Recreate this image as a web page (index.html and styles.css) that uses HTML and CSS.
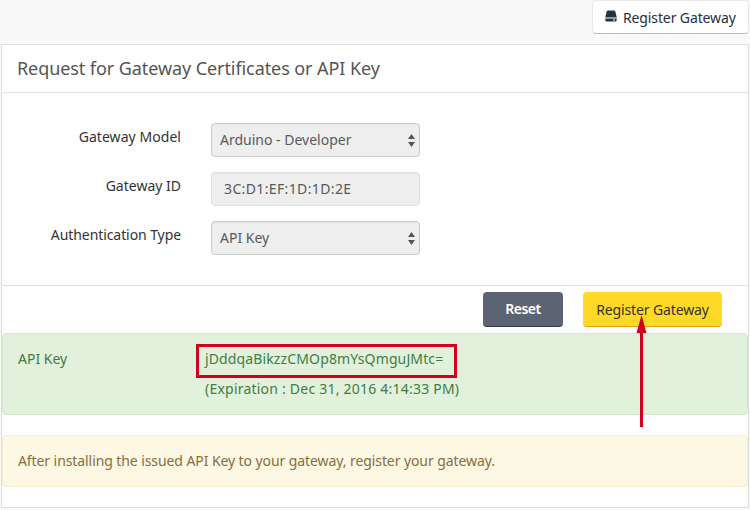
FILE: index.html
```html
<!DOCTYPE html>
<html lang="en">
<head>
<meta charset="utf-8">
<title>Register Gateway</title>
<link rel="stylesheet" href="styles.css">
</head>
<body>
<div class="toolbar">
  <button class="btn btn-default"><svg class="drive" viewBox="0 0 12 12"><path d="M3 .5h6q1 0 1.300 1L11.800 7.500H.2L1.700 1.500Q2 .5 3 .5z"/><path d="M.3 8.500h11.400v1.500q0 1.500-1.500 1.500H1.800Q.3 11.500.3 10z"/><path class="slot" d="M8 10h2"/></svg><span class="t-reg">Register Gateway</span></button>
</div>
<main class="panel">
  <header class="panel-head"><h1><span class="t-title">Request for Gateway Certificates or API Key</span></h1></header>
  <form class="fields">
    <div class="row"><label><span class="t-model">Gateway Model</span></label><div class="control select"><span>Arduino - Developer</span><svg class="sort" viewBox="0 0 7 13"><path d="M3.500 0L7 5H0zM0 8h7l-3.500 5z"/></svg></div></div>
    <div class="row"><label><span>Gateway ID</span></label><div class="control input"><span class="t-mac">3C:D1:EF:1D:1D:2E</span></div></div>
    <div class="row"><label><span class="t-auth">Authentication Type</span></label><div class="control select"><span>API Key</span><svg class="sort" viewBox="0 0 7 13"><path d="M3.500 0L7 5H0zM0 8h7l-3.500 5z"/></svg></div></div>
  </form>
  <div class="actions">
    <button class="btn btn-reset"><span class="t-reset">Reset</span></button>
    <button class="btn btn-primary"><span class="t-reg">Register Gateway</span></button>
  </div>
  <section class="alert success">
    <div class="key-label"><span>API Key</span></div>
    <div class="key-info"><div><span class="t-key">jDddqaBikzzCMOp8mYsQmguJMtc=</span></div><div><span class="t-exp">(Expiration : Dec 31, 2016 4:14:33 PM)</span></div></div>
  </section>
  <section class="alert warning"><span class="t-warn">After installing the issued API Key to your gateway, register your gateway.</span></section>
</main>
<div class="highlight"></div>
<svg class="arrow" viewBox="0 0 12 112"><path d="M6.500 0l5 18H8v94H5V18H1.500z"/></svg>
</body>
</html>
```
FILE: styles.css
```css
* { box-sizing: border-box; }
body { margin: 0; width: 750px; height: 510px; overflow: hidden; background: #f9f9f9; font: 400 14px/20px "Noto Sans", sans-serif; color: #333; }
span { white-space: nowrap; }
.toolbar { height: 44px; padding-right: 1px; display: flex; justify-content: flex-end; }
.btn { font: inherit; border: 0; border-radius: 4px; padding: 0; height: 35px; display: flex; align-items: center; justify-content: center; }
.btn-default { width: 157px; height: 34px; border: 1px solid #e9e9e9; border-bottom-color: #bbb; background: #fff; color: #253044; justify-content: flex-start; padding: 1px 0 0 12px; gap: 6px; }
.drive { width: 12px; height: 12px; fill: #253044; margin-top: -4px; }
.slot { stroke: #fff; stroke-width: 1; }
.panel { width: 748px; height: 464px; margin-left: 1px; background: #fff; border: 1px solid #ddd; }
.panel-head { height: 48px; border-bottom: 1px solid #e3e3e3; padding: 12px 15px; }
h1 { margin: 0; font-size: 18px; font-weight: inherit; line-height: 23px; color: #555; }
.fields { height: 193px; padding-top: 30px; border-bottom: 1px solid #e3e3e3; display: flex; flex-direction: column; gap: 15px; }
.row { display: flex; height: 34px; }
label { width: 179px; padding-top: 4px; margin-right: 30px; text-align: right; }
.control { width: 209px; height: 34px; background: #eee; border: 1px solid #ccc; border-radius: 4px; color: #5a5a5a; display: flex; align-items: center; padding: 0 4px 0 8px; justify-content: space-between; box-shadow: inset 0 1px 1px #0000000d; }
.input { border-color: #e2e2e2; padding-left: 12px; }
.sort { width: 7px; height: 13px; fill: #555; }
.actions { height: 47px; display: flex; justify-content: flex-end; gap: 20px; padding: 6px 26px 0 0; }
.btn-reset { width: 80px; background: #5c6473; color: #fff; border-bottom: 1px solid #303846; font-weight: 600; }
.btn-primary { width: 139px; background: #ffd926; color: #333; border-bottom: 1px solid #e5a500; padding-top: 1px; }
.alert { border: 1px solid; border-radius: 4px; width: 746px; padding: 15px; }
.success { height: 82px; background: #e1f1dc; border-color: #d3e8c6; color: #437c44; display: flex; }
.key-label { width: 187px; }
.key-info { display: grid; gap: 10px; align-content: start; }
.warning { height: 52px; margin-top: 20px; background: #fcf8e4; border-color: #faebcc; color: #8a6d3b; }
.highlight { position: absolute; left: 196px; top: 344px; width: 261px; height: 34px; border: 3px solid #d0021b; }
.arrow { position: absolute; left: 635px; top: 315px; width: 12px; height: 112px; fill: #d0021b; }
.t-reg { letter-spacing: -.12px; }
.t-title { letter-spacing: -.08px; }
.t-model { letter-spacing: .05px; }
.t-auth { letter-spacing: -.08px; }
.t-mac { letter-spacing: .37px; }
.t-reset { letter-spacing: -.5px; }
.t-key { letter-spacing: .13px; }
.t-exp { letter-spacing: .22px; }
.t-warn { letter-spacing: -.085px; }
```
